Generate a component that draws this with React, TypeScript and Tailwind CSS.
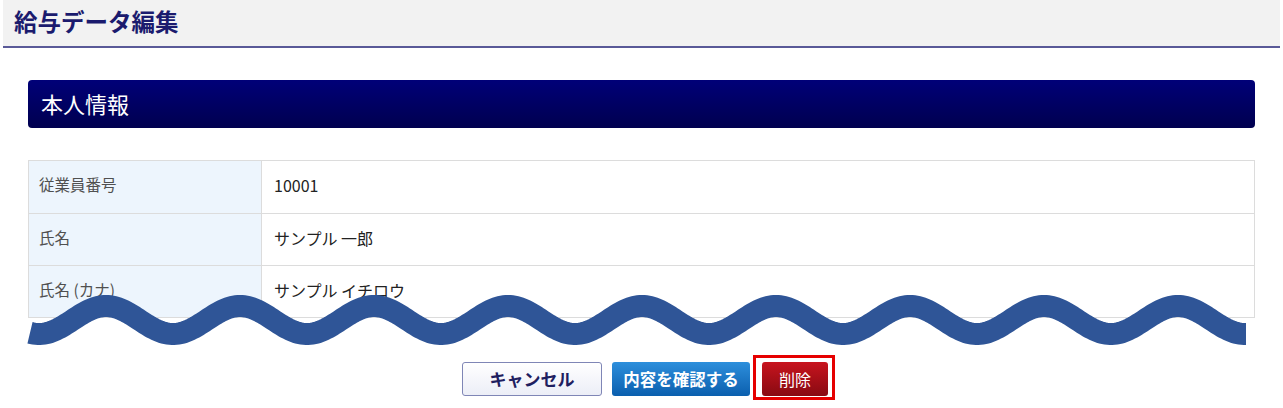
import React from "react";

const wavePath = (() => {
  const pts: string[] = [];
  for (let x = 30; x <= 1246; x += 2) {
    const y = 320 - 14 * Math.cos((2 * Math.PI * (x - 106)) / 134);
    pts.push(`${pts.length === 0 ? "M" : "L"}${x} ${(y - 280).toFixed(2)}`);
  }
  return pts.join(" ");
})();

const rows = [
  ["従業員番号", "10001"],
  ["氏名", "サンプル 一郎"],
  ["氏名 (カナ)", "サンプル イチロウ"],
];

export default function App() {
  return (
    <div
      className="relative w-[1283px] h-[408px] bg-white overflow-hidden"
      style={{ fontFamily: '"Noto Sans CJK JP", "Noto Sans", sans-serif' }}
    >
      <div className="mx-[3px] h-[48px] bg-[#f2f2f2] border-b-[2px] border-[#5a5a98] flex items-center pl-[11px] pb-[3px]">
        <h1 className="text-[23.5px] font-bold text-[#1b1b6e] leading-none">
          給与データ編集
        </h1>
      </div>

      <div className="px-[28px] pt-[32px]">
        <div className="h-[48px] rounded-[4px] bg-gradient-to-b from-[#000078] to-[#00004f] flex items-center pl-[13px] pb-[3px]">
          <span className="text-white text-[22px] leading-none">本人情報</span>
        </div>

        <div className="mt-[32px] border border-[#dcdcdc]">
          {rows.map(([k, v], i) => (
            <div
              key={k}
              className={`flex h-[52px] ${i > 0 ? "border-t border-[#dcdcdc]" : ""}`}
            >
              <div className="w-[233px] bg-[#edf5fd] border-r border-[#dcdcdc] flex items-center pl-[10px] pb-[4px] text-[15.5px] text-[#505050]">
                {k}
              </div>
              <div className="flex-1 flex items-center pl-[12px] pb-[4px] text-[16px] text-[#222]">
                {v}
              </div>
            </div>
          ))}
        </div>
      </div>

      <div className="flex justify-center gap-[10px] mt-[44px] pl-[7px]">
        <button className="w-[140px] h-[34px] rounded-[3px] border border-[#7f86b6] bg-gradient-to-b from-white to-[#eceef7] text-[17px] font-bold text-[#1f2060]">
          キャンセル
        </button>
        <button className="w-[138px] h-[34px] rounded-[3px] bg-gradient-to-b from-[#2d8fdc] to-[#0a5fae] text-[16.5px] font-bold text-white">
          内容を確認する
        </button>
        <div className="relative ml-[2px]">
          <button className="w-[66px] h-[34px] rounded-[3px] bg-gradient-to-b from-[#c8141e] to-[#880a12] text-[16px] text-white">
            削除
          </button>
          <div className="absolute left-[-9px] top-[-7px] w-[82px] h-[45px] border-[3px] border-[#e60000]" />
        </div>
      </div>

      <svg
        className="absolute left-0 top-[280px]"
        width="1283"
        height="80"
        viewBox="0 0 1283 80"
      >
        <path d={wavePath} fill="none" stroke="#2f5597" strokeWidth="22" strokeLinecap="butt" />
      </svg>
    </div>
  );
}
